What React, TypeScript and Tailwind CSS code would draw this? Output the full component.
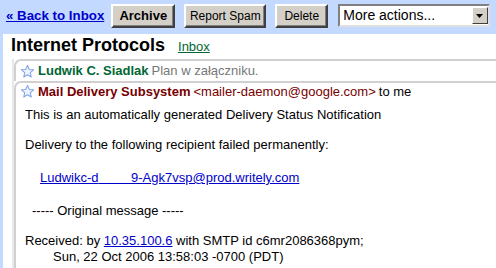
const font = { fontFamily: '"Liberation Sans", Arial, sans-serif' };

function Star() {
  return (
    <svg viewBox="0 0 16 16" className="h-[15px] w-[15px] shrink-0">
      <path
        d="M8 1.5 L9.9 5.8 L14.5 6.2 L11 9.3 L12 13.9 L8 11.5 L4 13.9 L5 9.3 L1.5 6.2 L6.1 5.8 Z"
        fill="#eef3ff"
        stroke="#7fa3e8"
        strokeWidth="1.1"
        strokeLinejoin="round"
      />
    </svg>
  );
}

function Btn({ label, w, bold }: { label: string; w: string; bold?: boolean }) {
  return (
    <button
      className={`${w} h-[24px] whitespace-nowrap bg-[#d4d0c8] px-0 text-[12px] leading-none text-black border-2 border-t-white border-l-white border-r-[#404040] border-b-[#404040] shadow-[inset_-1px_-1px_0_#808080] ${bold ? "font-bold text-[13px]" : ""}`}
    >
      {label}
    </button>
  );
}

export default function App() {
  return (
    <div className="flex h-[268px] w-[496px] flex-col overflow-hidden bg-[#c3d9ff] whitespace-nowrap" style={font}>
      <div className="flex h-[34px] shrink-0 items-center pl-[6px] pb-[3px]">
        <a href="#" className="text-[13.3px] font-bold text-[#0000cc] underline">
          « Back to Inbox
        </a>
        <div className="ml-[7px] flex gap-[9px]">
          <Btn label="Archive" w="w-[64px]" bold />
          <Btn label="Report Spam" w="w-[82px]" />
          <Btn label="Delete" w="w-[53px]" />
        </div>
        <div className="ml-[10px] flex h-[23px] w-[152px] items-center border-2 border-t-[#808080] border-l-[#808080] border-r-[#e0e0e0] border-b-[#e0e0e0] bg-white">
          <span className="flex-1 pl-[3px] text-[14px] text-black">More actions...</span>
          <span className="flex h-[17px] w-[16px] items-center justify-center border border-t-white border-l-white border-r-[#404040] border-b-[#404040] bg-[#d4d0c8]">
            <svg viewBox="0 0 8 4" className="h-[4px] w-[8px]">
              <path d="M0 0 H7 L3.5 4 Z" fill="#000" />
            </svg>
          </span>
        </div>
      </div>
      <div className="ml-[3px] flex flex-1 flex-col bg-white">
        <div className="flex h-[22px] items-baseline pl-[8px]">
          <h1 className="text-[18px] font-bold leading-[22px] text-black">Internet Protocols</h1>
          <a href="#" className="ml-[13px] text-[13px] text-[#006633] underline">
            Inbox
          </a>
        </div>
        <div className="ml-[9px] mt-[3px] flex flex-1 flex-col border-l-2 border-[#e8e8e8]">
          <div className="flex h-[22px] items-center gap-[3px] rounded-tl-[7px] border-l-2 border-t-2 border-[#d0d0d0] pl-[4px] text-[13px]">
            <Star />
            <span className="font-bold text-[#006633]">Ludwik C. Siadlak</span>
            <span className="text-[#777777]">Plan w załączniku.</span>
          </div>
          <div className="flex flex-1 flex-col rounded-tl-[7px] border-l-2 border-t-2 border-[#d0d0d0] text-[13px] text-black">
            <div className="flex h-[17px] items-center gap-[3px] pl-[4px]">
              <Star />
              <span className="font-bold text-[#770000]">Mail Delivery Subsystem</span>
              <span className="text-[#770000]">&lt;mailer-daemon@google.com&gt;</span>
              <span>to me</span>
            </div>
            <div className="pl-[9px] pt-[7px] leading-[16px]">
              <p>This is an automatically generated Delivery Status Notification</p>
              <p className="mt-[14px]">Delivery to the following recipient failed permanently:</p>
              <p className="mt-[17px] pl-[15px]">
                <a href="#" className="text-[#0000cc] underline">
                  Ludwikc-d<span className="bg-white text-white">xxxxx</span>9-Agk7vsp@prod.writely.com
                </a>
              </p>
              <p className="mt-[17px] pl-[7px]">----- Original message -----</p>
              <p className="mt-[14px]">
                Received: by{" "}
                <a href="#" className="text-[#0000cc] underline">
                  10.35.100.6
                </a>{" "}
                with SMTP id c6mr2086368pym;
              </p>
              <p className="pl-[28px]">Sun, 22 Oct 2006 13:58:03 -0700 (PDT)</p>
            </div>
          </div>
        </div>
      </div>
    </div>
  );
}
